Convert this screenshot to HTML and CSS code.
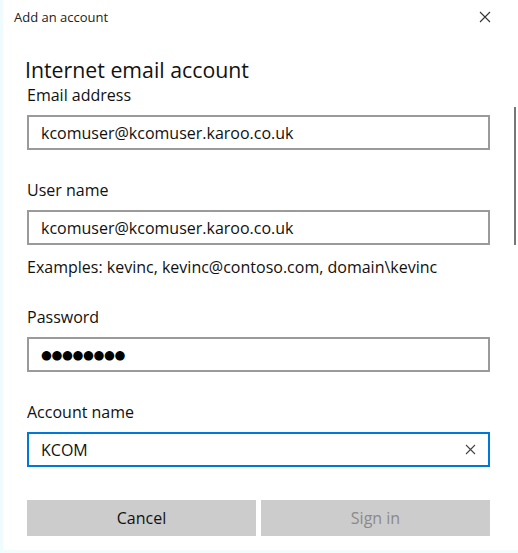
FILE: index.html
```html
<!DOCTYPE html>
<html>
<head>
<meta charset="utf-8">
<link rel="stylesheet" href="styles.css">
</head>
<body>
<div class="window">
  <div class="titlebar">
    <span class="title">Add an account</span>
    <svg class="close" width="12" height="12" viewBox="0 0 12 12"><path d="M1 1L11 11M11 1L1 11" stroke="#333" stroke-width="1.1" fill="none"/></svg>
  </div>
  <div class="content">
    <div class="form">
      <h1 class="heading">Internet email account</h1>
      <div class="label first">Email address</div>
      <div class="field">kcomuser@kcomuser.karoo.co.uk</div>
      <div class="label">User name</div>
      <div class="field">kcomuser@kcomuser.karoo.co.uk</div>
      <div class="hint">Examples: kevinc, kevinc@contoso.com, domain\kevinc</div>
      <div class="label">Password</div>
      <div class="field dots">●●●●●●●●</div>
      <div class="label">Account name</div>
      <div class="field focused"><span>KCOM</span>
        <svg class="clear" width="11" height="11" viewBox="0 0 11 11"><path d="M1 1L10 10M10 1L1 10" stroke="#444" stroke-width="1.1" fill="none"/></svg>
      </div>
      <div class="buttons">
        <div class="btn">Cancel</div>
        <div class="btn disabled">Sign in</div>
      </div>
    </div>
    <div class="scrollbar"></div>
  </div>
</div>
</body>
</html>
```
FILE: styles.css
```css
html, body {
  margin: 0;
  padding: 0;
  background: #ffffff;
}
body {
  font-family: "Open Sans", "Noto Sans", sans-serif;
  color: #1a1a1a;
}
.window {
  width: 518px;
  height: 553px;
  box-sizing: border-box;
  border-left: 3px solid #f0fbfd;
  border-bottom: 3px solid #f3fcfd;
  background: #fff;
  overflow: hidden;
}
.titlebar {
  height: 34px;
  display: flex;
  align-items: center;
  justify-content: space-between;
  padding: 0 27px 0 11px;
}
.title {
  font-size: 13px;
  color: #222;
}
.close {
  display: block;
}
.content {
  display: flex;
  padding-left: 24px;
}
.form {
  width: 463px;
  display: flex;
  flex-direction: column;
}
.heading {
  margin: 22px 0 0 -2px;
  font-weight: normal;
  font-size: 21.3px;
  line-height: 28px;
  color: #111;
}
.label {
  font-size: 16px;
  line-height: 20px;
  margin-top: 30px;
  color: #111;
}
.label.first {
  margin-top: 1px;
}
.field {
  margin-top: 10px;
  height: 35px;
  box-sizing: border-box;
  border: 2px solid #9a9a9a;
  display: flex;
  align-items: center;
  justify-content: space-between;
  padding: 0 12px 0 12px;
  font-size: 16px;
  color: #111;
}
.field.dots {
  font-family: "DejaVu Sans", sans-serif;
  font-size: 12.5px;
  letter-spacing: -0.4px;
  color: #000;
}
.field.focused {
  border-color: #0078d7;
}
.clear {
  display: block;
}
.hint {
  font-size: 16px;
  line-height: 20px;
  margin-top: 12px;
  color: #111;
}
.buttons {
  margin-top: 33px;
  display: flex;
  gap: 5px;
}
.btn {
  flex: 1;
  height: 36px;
  background: #cccccc;
  display: flex;
  align-items: center;
  justify-content: center;
  font-size: 16px;
  color: #111;
}
.btn.disabled {
  color: #8a8a8a;
}
.scrollbar {
  width: 2px;
  height: 138px;
  margin-top: 73px;
  margin-left: 24px;
  background: #777;
}
```
